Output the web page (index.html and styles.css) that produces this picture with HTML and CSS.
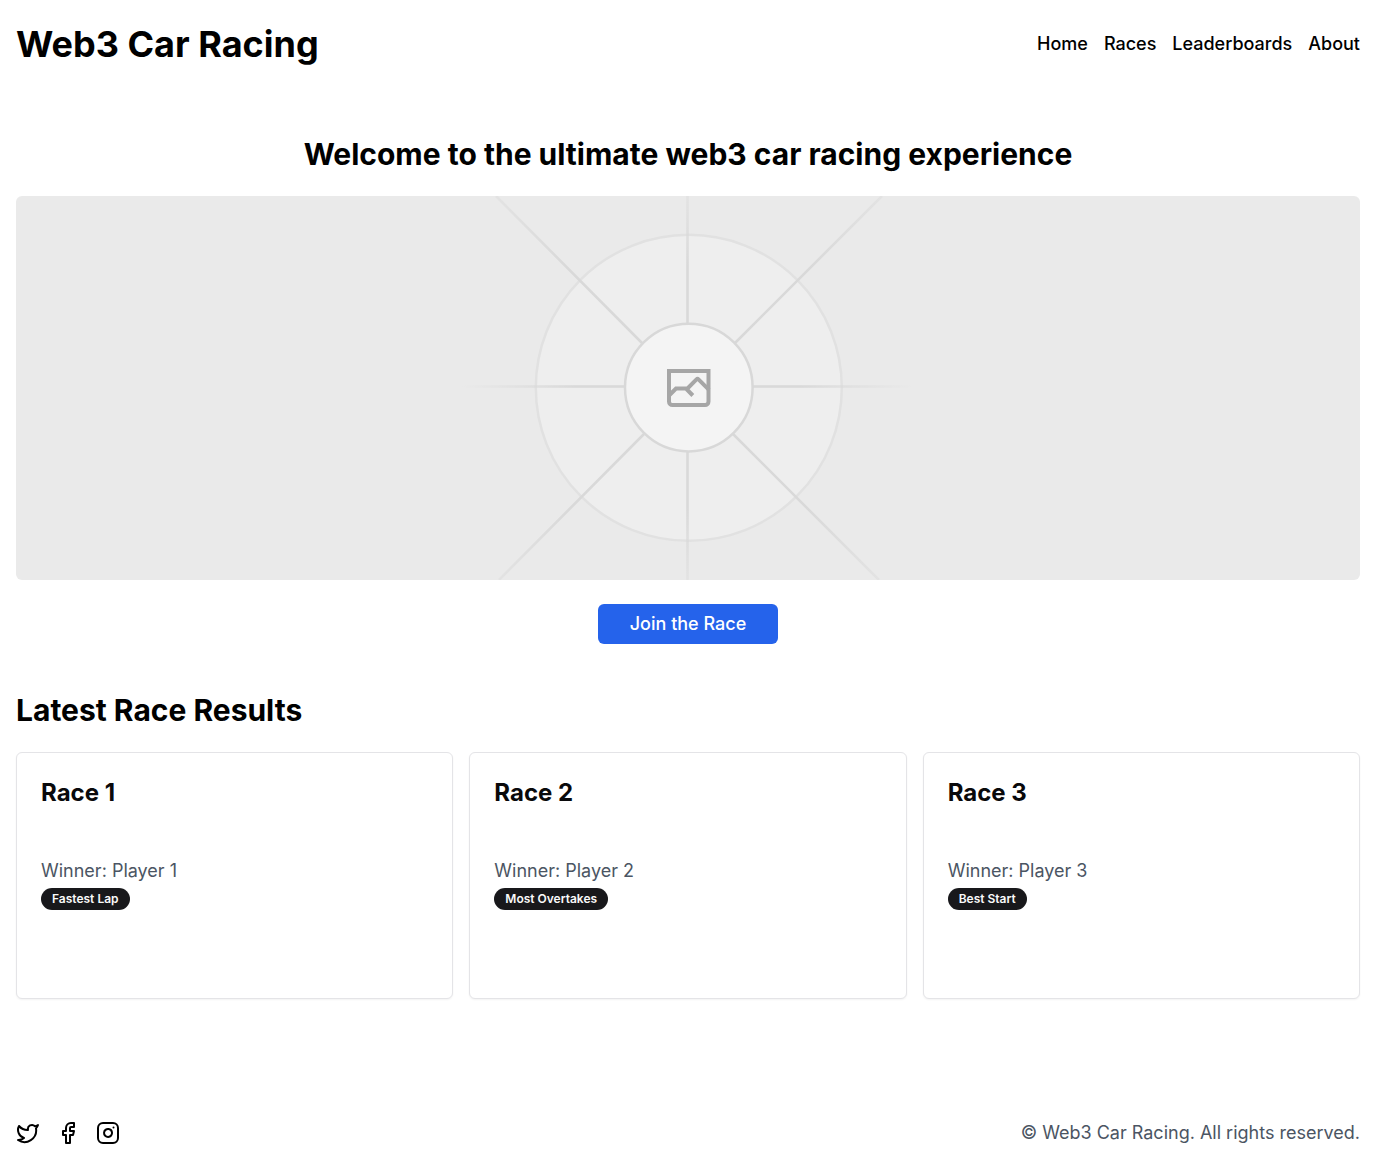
FILE: index.html
```html
<!DOCTYPE html>
<html lang="en">
<head>
<meta charset="utf-8">
<meta name="viewport" content="width=device-width, initial-scale=1">
<title>Web3 Car Racing</title>
<link rel="stylesheet" href="styles.css">
</head>
<body>
<header class="site-header">
  <h1 class="site-title">Web3 Car Racing</h1>
  <nav class="site-nav">
    <a href="#home">Home</a>
    <a href="#races">Races</a>
    <a href="#leaderboards">Leaderboards</a>
    <a href="#about">About</a>
  </nav>
</header>
<main class="site-main">
  <section class="hero">
    <h2 class="section-title">Welcome to the ultimate web3 car racing experience</h2>
    <svg class="hero-image" viewBox="0 0 1344 384" preserveAspectRatio="xMidYMid slice" role="img" aria-label="Hero image placeholder">
      <defs>
        <radialGradient id="ray" gradientUnits="userSpaceOnUse" cx="672" cy="191" r="282">
          <stop offset="0" stop-color="#d8d8d8"/>
          <stop offset=".6" stop-color="#d9d9d9"/>
          <stop offset="1" stop-color="#e4e4e4"/>
        </radialGradient>
        <linearGradient id="ray-x" gradientUnits="userSpaceOnUse" x1="446" y1="0" x2="897" y2="0">
          <stop offset="0" stop-color="#d9d9d9" stop-opacity="0"/>
          <stop offset=".25" stop-color="#d9d9d9"/>
          <stop offset=".75" stop-color="#d9d9d9"/>
          <stop offset="1" stop-color="#d9d9d9" stop-opacity="0"/>
        </linearGradient>
        <linearGradient id="ray-y" gradientUnits="userSpaceOnUse" x1="0" y1="-50" x2="0" y2="432">
          <stop offset="0" stop-color="#d9d9d9" stop-opacity="0"/>
          <stop offset=".25" stop-color="#d9d9d9"/>
          <stop offset=".75" stop-color="#d9d9d9"/>
          <stop offset="1" stop-color="#d9d9d9" stop-opacity="0"/>
        </linearGradient>
      </defs>
      <rect width="1344" height="384" fill="#eaeaea"/>
      <circle cx="672.8" cy="191.8" r="153" fill="#eeeeee" stroke="#e1e1e1" stroke-width="2.5"/>
      <path d="M480 0 626 147M866 0 719 147M483 384 628 238M863 384 717 238" stroke="url(#ray)" stroke-width="2.6"/>
      <rect x="446" y="189.200" width="451" height="2.600" fill="url(#ray-x)"/>
      <rect x="670.200" y="0" width="2.600" height="384" fill="url(#ray-y)"/>
      <circle cx="672.8" cy="191.600" r="63.800" fill="#f4f4f4" stroke="#d8d8d8" stroke-width="2.5"/>
      <g fill="none" stroke="#a6a6a6" stroke-width="4">
        <path d="M653 175h39.500v30.500a3.500 3.500 0 0 1-3.500 3.500H656.500a3.500 3.500 0 0 1-3.500-3.500z"/>
        <path d="M653 199.500l7-7h11.500l9-9.200q1-1 2 0l10.500 10.500M670 192.500l6.800 7"/>
      </g>
    </svg>
    <button class="join-button" type="button">Join the Race</button>
  </section>
  <section class="results">
    <h2 class="section-title">Latest Race Results</h2>
    <div class="card-grid">
      <article class="card">
        <h3 class="card-title">Race 1</h3>
        <p class="winner">Winner: Player 1</p>
        <span class="badge">Fastest Lap</span>
      </article>
      <article class="card">
        <h3 class="card-title">Race 2</h3>
        <p class="winner">Winner: Player 2</p>
        <span class="badge">Most Overtakes</span>
      </article>
      <article class="card">
        <h3 class="card-title">Race 3</h3>
        <p class="winner">Winner: Player 3</p>
        <span class="badge">Best Start</span>
      </article>
    </div>
  </section>
</main>
<footer class="site-footer">
  <div class="social">
    <a href="#twitter" aria-label="Twitter"><svg class="icon" viewBox="0 0 24 24"><path d="M22 4s-.7 2.100-2 3.400c1.600 10-9.400 17.300-18 11.600 2.200.1 4.400-.6 6-2C3 15.500.5 9.600 3 5c2.200 2.600 5.600 4.100 9 4-.9-4.200 4-6.600 7-3.800 1.100 0 3-1.200 3-1.200z"/></svg></a>
    <a href="#facebook" aria-label="Facebook"><svg class="icon" viewBox="0 0 24 24"><path d="M18 2h-3a5 5 0 0 0-5 5v3H7v4h3v8h4v-8h3l1-4h-4V7a1 1 0 0 1 1-1h3z"/></svg></a>
    <a href="#instagram" aria-label="Instagram"><svg class="icon" viewBox="0 0 24 24"><rect x="2" y="2" width="20" height="20" rx="5"/><path d="M16 11.370A4 4 0 1 1 12.630 8 4 4 0 0 1 16 11.370zM17.500 6.500h.01"/></svg></a>
  </div>
  <p class="copyright">© Web3 Car Racing. All rights reserved.</p>
</footer>
</body>
</html>
```
FILE: styles.css
```css
* {
  box-sizing: border-box;
  margin: 0;
}

body {
  min-height: 100vh;
  display: flex;
  flex-direction: column;
  background: #fff;
  color: #000;
  font-family: Inter, "Liberation Sans", sans-serif;
  font-size: 18px;
  line-height: 28px;
}

a {
  color: inherit;
  text-decoration: none;
}

.site-header,
.site-footer {
  display: flex;
  flex-wrap: wrap;
  align-items: center;
  justify-content: space-between;
  gap: 16px;
  padding: 24px 16px;
}

.site-title {
  font-size: 36px;
  line-height: 40px;
  font-weight: 700;
}

.site-nav {
  display: flex;
  flex-wrap: wrap;
  gap: 16px;
  font-weight: 500;
}

.site-main {
  flex: 1;
  display: flex;
  flex-direction: column;
  gap: 48px;
  padding: 48px 16px 96px;
}

.hero,
.results {
  display: flex;
  flex-direction: column;
  gap: 24px;
}

.hero {
  align-items: center;
  text-align: center;
}

.section-title {
  font-size: 30px;
  line-height: 36px;
  font-weight: 700;
}

.hero-image {
  display: block;
  width: 100%;
  height: 384px;
  border-radius: 6px;
}

.join-button {
  height: 40px;
  padding: 0 32px;
  border: 0;
  border-radius: 6px;
  background: #2563eb;
  color: #fff;
  font: inherit;
  font-weight: 500;
  cursor: pointer;
}

.card-grid {
  display: grid;
  grid-template-columns: repeat(auto-fit, minmax(280px, 1fr));
  gap: 16px;
}

.card {
  padding: 24px 24px 88px;
  border: 1px solid #e4e4e7;
  border-radius: 6px;
  background: #fff;
  box-shadow: 0 1px 2px rgba(0, 0, 0, 0.05);
}

.card-title {
  margin-bottom: 48px;
  color: #09090b;
  font-size: 24px;
  line-height: 32px;
  font-weight: 700;
}

.winner,
.copyright {
  color: #4b5563;
}

.badge {
  display: block;
  width: fit-content;
  margin-top: 3px;
  padding: 3px 11px;
  border-radius: 11px;
  background: #18181b;
  color: #fafafa;
  font-size: 12px;
  line-height: 16px;
  font-weight: 600;
}

.social {
  display: flex;
  gap: 16px;
}

.icon {
  display: block;
  width: 24px;
  height: 24px;
  fill: none;
  stroke: currentColor;
  stroke-width: 2;
  stroke-linecap: round;
  stroke-linejoin: round;
}
```
